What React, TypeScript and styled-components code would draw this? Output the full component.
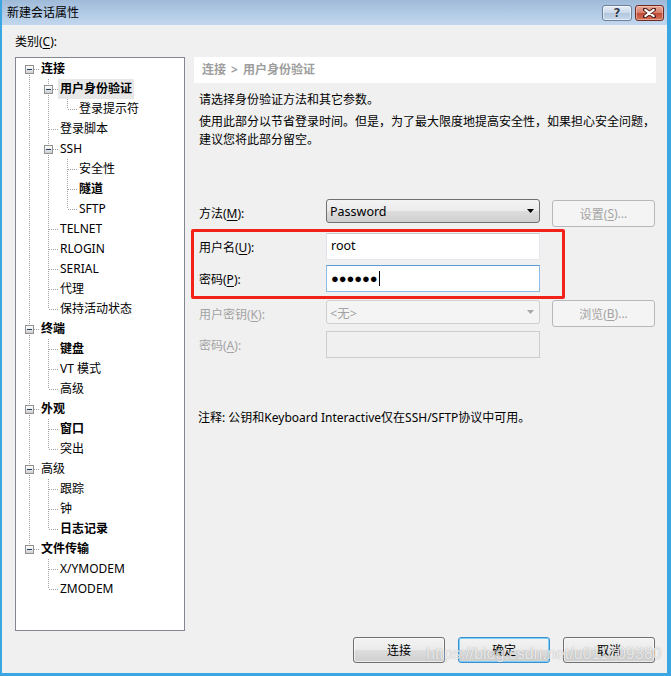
import React from 'react';
import styled, { createGlobalStyle, css } from 'styled-components';

const GlobalStyle = createGlobalStyle`
  html, body { margin: 0; padding: 0; background: #f0f0f0; }
  body {
    font-family: "Noto Sans", "Noto Sans CJK SC", sans-serif;
    font-size: 12px;
    color: #000;
  }
  * { box-sizing: border-box; }
`;

type Node = { label: string; bold?: boolean; selected?: boolean; children?: Node[] };
type Kind = 'none' | 'pipe' | 'tee' | 'elbow' | 'start';
type FlatRow = { node: Node; guides: Kind[] };

const TREE: Node[] = [
  {
    label: '连接',
    bold: true,
    children: [
      { label: '用户身份验证', bold: true, selected: true, children: [{ label: '登录提示符' }] },
      { label: '登录脚本' },
      { label: 'SSH', children: [{ label: '安全性' }, { label: '隧道', bold: true }, { label: 'SFTP' }] },
      { label: 'TELNET' },
      { label: 'RLOGIN' },
      { label: 'SERIAL' },
      { label: '代理' },
      { label: '保持活动状态' },
    ],
  },
  { label: '终端', bold: true, children: [{ label: '键盘', bold: true }, { label: 'VT 模式' }, { label: '高级' }] },
  { label: '外观', bold: true, children: [{ label: '窗口', bold: true }, { label: '突出' }] },
  { label: '高级', children: [{ label: '跟踪' }, { label: '钟' }, { label: '日志记录', bold: true }] },
  { label: '文件传输', bold: true, children: [{ label: 'X/YMODEM' }, { label: 'ZMODEM' }] },
];

function flatten(nodes: Node[], level: number, cont: boolean[], out: FlatRow[]) {
  nodes.forEach((n, i) => {
    const hasNext = i < nodes.length - 1;
    const own: Kind = level === 0 && i === 0 ? 'start' : hasNext ? 'tee' : 'elbow';
    out.push({ node: n, guides: [...cont.map((c) => (c ? 'pipe' : 'none') as Kind), own] });
    if (n.children) flatten(n.children, level + 1, [...cont, hasNext], out);
  });
  return out;
}

const ROWS = flatten(TREE, 0, [], []);

const dotV = 'repeating-linear-gradient(to bottom, #a0a0a0 0 1px, transparent 1px 2px)';
const dotH = 'repeating-linear-gradient(to right, #a0a0a0 0 1px, transparent 1px 2px)';

const guideStyles: Record<Kind, ReturnType<typeof css>> = {
  none: css``,
  pipe: css`
    background-image: ${dotV};
    background-size: 1px 20px;
    background-position: 9px 0;
  `,
  tee: css`
    background-image: ${dotV}, ${dotH};
    background-size: 1px 20px, 9px 1px;
    background-position: 9px 0, 10px 10px;
  `,
  elbow: css`
    background-image: ${dotV}, ${dotH};
    background-size: 1px 10px, 9px 1px;
    background-position: 9px 0, 10px 10px;
  `,
  start: css`
    background-image: ${dotV}, ${dotH};
    background-size: 1px 10px, 9px 1px;
    background-position: 9px 10px, 10px 10px;
  `,
};

const Window = styled.div`
  position: relative;
  width: 671px;
  height: 676px;
  display: flex;
  flex-direction: column;
  background: #f0f0f0;
  border-left: 2px solid #3aa6e2;
  border-right: 4px solid #3aa6e2;
  border-bottom: 3px solid #3aa6e2;
  overflow: hidden;
`;

const TitleBar = styled.div`
  height: 25px;
  flex: none;
  display: flex;
  align-items: center;
  justify-content: space-between;
  padding: 0 3px 0 5px;
  background: linear-gradient(to bottom, #9fbad9, #b4cce6 60%, #c2d7ee);
`;

const TitleText = styled.span`
  font-size: 12px;
  line-height: 16px;
  color: #000;
`;

const TitleButtons = styled.div`
  display: flex;
  gap: 3px;
  margin-top: 1px;
`;

const CaptionButton = styled.div<{ $variant: 'help' | 'close' }>`
  height: 16px;
  border-radius: 3px;
  display: flex;
  align-items: center;
  justify-content: center;
  ${({ $variant }) =>
    $variant === 'help'
      ? css`
          width: 30px;
          border: 1px solid #6c819b;
          background: linear-gradient(to bottom, #e6eef7, #cbd9ea 48%, #b3c6dd 52%, #c6d7ea);
          box-shadow: inset 0 0 0 1px rgba(255, 255, 255, 0.55);
        `
      : css`
          width: 29px;
          border: 1px solid #6d2b23;
          background: linear-gradient(to bottom, #e9a99a, #d7806c 48%, #c24b35 52%, #d2735b);
          box-shadow: inset 0 0 0 1px rgba(255, 220, 210, 0.5);
        `}
`;

const HelpGlyph = styled.span`
  font-family: "DejaVu Sans", sans-serif;
  font-weight: bold;
  font-size: 12px;
  line-height: 12px;
  color: #2e3b4d;
  text-shadow: 0 0 1px #fff, 0 0 1px #fff;
`;

const Body = styled.div`
  flex: 1;
  display: flex;
  flex-direction: column;
  padding: 0 11px 0 13px;
`;

const CategoryLabel = styled.div`
  height: 32px;
  padding-top: 9px;
  line-height: 16px;
`;

const Mn = styled.span`
  text-decoration: underline;
  text-underline-offset: 2px;
`;

const Main = styled.div`
  display: flex;
  gap: 9px;
  height: 574px;
`;

const TreeBox = styled.div`
  width: 170px;
  height: 574px;
  flex: none;
  border: 1px solid #828790;
  background: #fff;
  padding: 1px 0 0 4px;
`;

const TreeRow = styled.div`
  display: flex;
  height: 20px;
`;

const Guide = styled.span<{ $kind: Kind }>`
  flex: none;
  width: 19px;
  height: 20px;
  display: flex;
  justify-content: center;
  align-items: flex-start;
  padding-top: 6px;
  background-repeat: no-repeat;
  ${({ $kind }) => guideStyles[$kind]}
`;

const Expander = styled.span`
  width: 9px;
  height: 9px;
  border: 1px solid #919191;
  background: linear-gradient(to bottom, #ffffff, #e3e3e3 60%, #cfcfcf);
  display: flex;
  align-items: center;
  justify-content: center;
  &::before {
    content: '';
    width: 5px;
    height: 1px;
    background: #22406a;
  }
`;

const NodeLabel = styled.span<{ $bold?: boolean; $selected?: boolean }>`
  line-height: 20px;
  height: 20px;
  padding: 0 2px;
  white-space: nowrap;
  font-weight: ${(p) => (p.$bold ? 700 : 400)};
  background: ${(p) => (p.$selected ? '#e7e7e7' : 'transparent')};
`;

const Panel = styled.div`
  flex: 1;
  display: flex;
  flex-direction: column;
`;

const Breadcrumb = styled.div`
  height: 26px;
  line-height: 26px;
  background: #fff;
  padding-left: 8px;
  color: #9d9d9d;
  font-weight: 700;
  word-spacing: 2px;
`;

const Para = styled.div<{ $gap: number }>`
  margin-top: ${(p) => p.$gap}px;
  padding-left: 5px;
  line-height: 18px;
  white-space: nowrap;
`;

const Form = styled.div`
  margin-top: 50px;
  padding-left: 5px;
  display: flex;
  flex-direction: column;
`;

const FieldRow = styled.div<{ $h: number; $mt?: number }>`
  display: flex;
  align-items: center;
  height: ${(p) => p.$h}px;
  margin-top: ${(p) => p.$mt ?? 0}px;
`;

const FieldLabel = styled.span<{ $disabled?: boolean }>`
  width: 127px;
  flex: none;
  color: ${(p) => (p.$disabled ? '#a3a3a3' : '#000')};
`;

const Select = styled.div<{ $disabled?: boolean }>`
  align-self: flex-start;
  width: 214px;
  height: 24px;
  flex: none;
  border-radius: 3px;
  display: flex;
  align-items: center;
  justify-content: space-between;
  padding: 0 5px 0 3px;
  ${({ $disabled }) =>
    $disabled
      ? css`
          border: 1px solid #cfcfcf;
          background: #f4f4f4;
          color: #a3a3a3;
        `
      : css`
          border: 1px solid #707070;
          background: linear-gradient(to bottom, #f3f3f3, #ebebeb 48%, #dddddd 52%, #cfcfcf);
          color: #000;
        `}
`;

const SelectText = styled.span`
  font-size: 12.5px;
`;

const TextBox = styled.div<{ $state: 'normal' | 'focus' | 'disabled' }>`
  width: 214px;
  height: 27px;
  flex: none;
  display: flex;
  align-items: center;
  padding-left: 4px;
  border: 1px solid;
  ${({ $state }) =>
    $state === 'normal'
      ? css`
          background: #fff;
          border-color: #c5c7cc #e3e9ef #e3e9ef #e2e3ea;
        `
      : $state === 'focus'
      ? css`
          background: #fff;
          border-color: #5a9bd6 #8cbbe8 #8cbbe8 #8cbbe8;
        `
      : css`
          background: #f0f0f0;
          border-color: #cdcdcd;
        `}
`;

const InputText = styled.span`
  font-size: 12.5px;
  margin-top: -2px;
`;

const Dots = styled.span`
  font-family: "Liberation Sans", sans-serif;
  font-size: 13px;
  letter-spacing: -0.1px;
`;

const Caret = styled.span`
  display: inline-block;
  width: 1px;
  height: 15px;
  background: #000;
  margin-left: 1px;
`;

const SideButton = styled.div<{ $mt?: number }>`
  align-self: flex-start;
  margin-left: 12px;
  margin-top: ${(p) => p.$mt ?? 0}px;
  width: 103px;
  height: 27px;
  border: 1px solid #b5b9bc;
  border-radius: 3px;
  background: #f4f4f4;
  color: #a3a3a3;
  display: flex;
  align-items: center;
  justify-content: center;
`;

const RedGroup = styled.div`
  position: relative;
  margin-top: 6px;
  display: flex;
  flex-direction: column;
  gap: 5px;
`;

const RedFrame = styled.div`
  position: absolute;
  left: -8px;
  top: -4px;
  width: 374px;
  height: 70px;
  border: 3px solid #f2211a;
  border-radius: 2px;
  pointer-events: none;
`;

const Note = styled.div`
  margin-top: 51px;
  padding-left: 4px;
  line-height: 18px;
  white-space: nowrap;
`;

const ButtonRow = styled.div`
  margin-top: 6px;
  margin-right: 1px;
  display: flex;
  justify-content: flex-end;
  gap: 13px;
`;

const DialogButton = styled.div<{ $default?: boolean }>`
  width: 92px;
  height: 26px;
  border-radius: 3px;
  display: flex;
  align-items: center;
  justify-content: center;
  background: linear-gradient(to bottom, #f3f3f3, #ebebeb 48%, #dddddd 52%, #cfcfcf);
  border: 1px solid ${(p) => (p.$default ? '#3a8fd0' : '#707070')};
  box-shadow: ${(p) => (p.$default ? 'inset 0 0 0 1px #7fd0f6' : 'inset 0 0 0 1px rgba(255,255,255,0.6)')};
`;

const Watermark = styled.div`
  position: absolute;
  left: 424px;
  top: 645px;
  font-family: "Liberation Sans", sans-serif;
  font-size: 16px;
  line-height: 18px;
  color: rgba(255, 255, 255, 0.8);
  text-shadow: 0 0 1px rgba(90, 90, 90, 0.55);
  pointer-events: none;
  white-space: nowrap;
`;

const CloseIcon = () => (
  <svg width="13" height="10" viewBox="0 0 13 10">
    <path d="M2 1.5 L11 8.5 M11 1.5 L2 8.5" stroke="#4a1a12" strokeWidth="4" strokeLinecap="round" />
    <path d="M2.3 1.8 L10.7 8.2 M10.7 1.8 L2.3 8.2" stroke="#ffffff" strokeWidth="2.2" strokeLinecap="round" />
  </svg>
);

const Arrow = ({ color }: { color: string }) => (
  <svg width="7" height="4" viewBox="0 0 7 4">
    <path d="M0 0 H7 L3.5 4 Z" fill={color} />
  </svg>
);

export default function App() {
  return (
    <>
      <GlobalStyle />
      <Window>
        <TitleBar>
          <TitleText>新建会话属性</TitleText>
          <TitleButtons>
            <CaptionButton $variant="help">
              <HelpGlyph>?</HelpGlyph>
            </CaptionButton>
            <CaptionButton $variant="close">
              <CloseIcon />
            </CaptionButton>
          </TitleButtons>
        </TitleBar>
        <Body>
          <CategoryLabel>
            类别(<Mn>C</Mn>):
          </CategoryLabel>
          <Main>
            <TreeBox>
              {ROWS.map((r, i) => (
                <TreeRow key={i}>
                  {r.guides.map((g, j) => (
                    <Guide key={j} $kind={g}>
                      {j === r.guides.length - 1 && r.node.children ? <Expander /> : null}
                    </Guide>
                  ))}
                  <NodeLabel $bold={r.node.bold} $selected={r.node.selected}>
                    {r.node.label}
                  </NodeLabel>
                </TreeRow>
              ))}
            </TreeBox>
            <Panel>
              <Breadcrumb>连接 &gt; 用户身份验证</Breadcrumb>
              <Para $gap={8}>请选择身份验证方法和其它参数。</Para>
              <Para $gap={4}>
                使用此部分以节省登录时间。但是，为了最大限度地提高安全性，如果担心安全问题，
                <br />
                建议您将此部分留空。
              </Para>
              <Form>
                <FieldRow $h={28}>
                  <FieldLabel>
                    方法(<Mn>M</Mn>):
                  </FieldLabel>
                  <Select>
                    <SelectText>Password</SelectText>
                    <Arrow color="#000" />
                  </Select>
                  <SideButton $mt={1}>
                    设置(<Mn>S</Mn>)...
                  </SideButton>
                </FieldRow>
                <RedGroup>
                  <FieldRow $h={27}>
                    <FieldLabel>
                      用户名(<Mn>U</Mn>):
                    </FieldLabel>
                    <TextBox $state="normal">
                      <InputText>root</InputText>
                    </TextBox>
                  </FieldRow>
                  <FieldRow $h={27}>
                    <FieldLabel>
                      密码(<Mn>P</Mn>):
                    </FieldLabel>
                    <TextBox $state="focus">
                      <Dots>●●●●●●</Dots>
                      <Caret />
                    </TextBox>
                  </FieldRow>
                  <RedFrame />
                </RedGroup>
                <FieldRow $h={28} $mt={8}>
                  <FieldLabel $disabled>
                    用户密钥(<Mn>K</Mn>):
                  </FieldLabel>
                  <Select $disabled>
                    <SelectText>&lt;无&gt;</SelectText>
                    <Arrow color="#a8a8a8" />
                  </Select>
                  <SideButton>
                    浏览(<Mn>B</Mn>)...
                  </SideButton>
                </FieldRow>
                <FieldRow $h={27} $mt={3}>
                  <FieldLabel $disabled>
                    密码(<Mn>A</Mn>):
                  </FieldLabel>
                  <TextBox $state="disabled" />
                </FieldRow>
              </Form>
              <Note>注释: 公钥和Keyboard Interactive仅在SSH/SFTP协议中可用。</Note>
            </Panel>
          </Main>
          <ButtonRow>
            <DialogButton>连接</DialogButton>
            <DialogButton $default>确定</DialogButton>
            <DialogButton>取消</DialogButton>
          </ButtonRow>
        </Body>
        <Watermark>https://blog.csdn.net/u011709380</Watermark>
      </Window>
    </>
  );
}
